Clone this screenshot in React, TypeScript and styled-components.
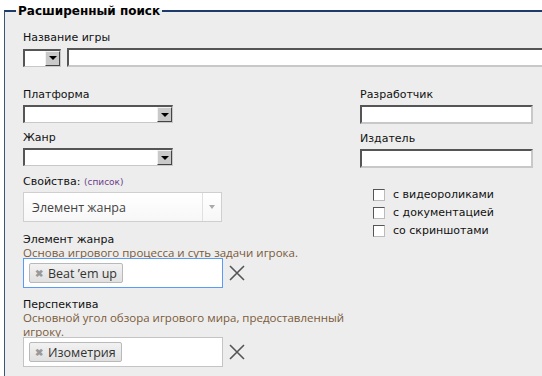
import styled, { createGlobalStyle } from "styled-components";

const GlobalStyle = createGlobalStyle`
  html, body {
    margin: 0;
    padding: 0;
    background: #fff;
  }
  body {
    font-family: "DejaVu Sans", Verdana, sans-serif;
    font-size: 11px;
    color: #111;
  }
`

const Page = styled.div`
  width: 542px;
  height: 376px;
  overflow: hidden;
  padding: 4px 0 0 4px;
  box-sizing: border-box;
`

const Fieldset = styled.fieldset`
  margin: 0;
  padding: 13px 0 20px 18px;
  background: #ededed;
  border: none;
  border-top: 2px solid #1d3c6b;
  border-left: 1px solid #3b5478;
  min-width: 0;
`

const Legend = styled.legend`
  font-weight: bold;
  font-size: 12px;
  padding: 0 2px;
  margin-left: -7px;
  color: #000;
`

const Label = styled.div<{ $tight?: boolean }>`
  line-height: ${p => (p.$tight ? 13 : 14)}px;
  margin-bottom: ${p => (p.$tight ? 0 : 3)}px;
  color: #111;
`

const Small = styled.span`
  font-size: 9px;
  color: #6b3d8a;
`

const Hint = styled.div`
  font-family: "Open Sans", sans-serif;
  font-size: 11.5px;
  line-height: 14px;
  color: #7a5a3a;
  width: 340px;
`

const NameRow = styled.div`
  display: flex;
  align-items: center;
  gap: 6px;
  margin-right: -40px;
`

const Columns = styled.div`
  display: grid;
  grid-template-columns: 337px 173px;
  margin-top: 21px;
`

const Column = styled.div`
  display: flex;
  flex-direction: column;
`

const Field = styled.div<{ $gap?: number }>`
  margin-bottom: ${p => p.$gap ?? 8}px;
`

const ClassicSelect = styled.div<{ $w: number }>`
  width: ${p => p.$w}px;
  height: 18px;
  box-sizing: border-box;
  background: #fff;
  border-top: 2px solid #555;
  border-left: 2px solid #555;
  border-bottom: 1px solid #c8c8c8;
  border-right: 1px solid #c8c8c8;
  display: flex;
  justify-content: flex-end;
`

const ArrowBtn = styled.div`
  width: 15px;
  height: 15px;
  box-sizing: border-box;
  background: #c9c9c9;
  border-top: 1px solid #f2f2f2;
  border-left: 1px solid #f2f2f2;
  border-right: 1px solid #444;
  border-bottom: 1px solid #444;
  display: flex;
  align-items: center;
  justify-content: center;
  &::after {
    content: "";
    border-left: 4px solid transparent;
    border-right: 4px solid transparent;
    border-top: 4px solid #000;
  }
`

const TextInput = styled.div<{ $w?: number }>`
  ${p => (p.$w ? `width: ${p.$w}px;` : "flex: 1;")}
  height: 19px;
  box-sizing: border-box;
  background: #fff;
  border-top: 2px solid #555;
  border-left: 2px solid #555;
  border-bottom: 2px solid #c8c8c8;
  border-right: 2px solid #c8c8c8;
`

const ChosenSingle = styled.div`
  width: 199px;
  height: 30px;
  box-sizing: border-box;
  border: 1px solid #cfcfcf;
  background: linear-gradient(#fff, #f7f7f7);
  display: flex;
  align-items: center;
  font-family: "Open Sans", sans-serif;
  font-size: 12.5px;
  color: #444;
  margin-bottom: 11px;
`

const ChosenText = styled.span`
  flex: 1;
  padding-left: 8px;
`

const ChosenArrow = styled.div`
  width: 18px;
  height: 100%;
  border-left: 1px solid #e0e0e0;
  display: flex;
  align-items: center;
  justify-content: center;
  &::after {
    content: "";
    border-left: 3px solid transparent;
    border-right: 3px solid transparent;
    border-top: 4px solid #aaa;
  }
`

const MultiRow = styled.div`
  display: flex;
  align-items: center;
  gap: 5px;
  margin-top: -2px;
`

const ChosenMulti = styled.div<{ $focus?: boolean }>`
  width: 200px;
  height: 30px;
  box-sizing: border-box;
  border: 1px solid ${p => (p.$focus ? "#5b9bf8" : "#c4c4c4")};
  background: #fff;
  display: flex;
  align-items: center;
  padding-left: 5px;
`

const Tag = styled.div`
  height: 20px;
  box-sizing: border-box;
  border: 1px solid #b9b9b9;
  border-radius: 2px;
  background: linear-gradient(#f2f2f2, #e0e0e0);
  display: flex;
  align-items: center;
  gap: 5px;
  padding: 0 5px;
  font-family: "Open Sans", sans-serif;
  font-size: 12.5px;
  color: #333;
`

const TagX = styled.span`
  font-size: 10px;
  color: #999;
  font-weight: bold;
`

const Clear = styled.svg`
  width: 18px;
  height: 18px;
`

const Checks = styled.div`
  display: flex;
  flex-direction: column;
  gap: 6px;
  margin: 13px 0 0 13px;
`

const CheckRow = styled.label`
  display: flex;
  align-items: center;
  gap: 8px;
  line-height: 12px;
`

const Box = styled.span`
  width: 12px;
  height: 12px;
  box-sizing: border-box;
  background: #fff;
  border-top: 1px solid #555;
  border-left: 1px solid #555;
  border-bottom: 1px solid #bbb;
  border-right: 1px solid #bbb;
`

const Section = styled.div`
  margin-top: 10px;
`

function ClearIcon() {
  return (
    <Clear viewBox="0 0 18 18">
      <path d="M2 2 L16 16 M16 2 L2 16" stroke="#555" strokeWidth="1.6" fill="none" />
    </Clear>
  )
}

function App() {
  return (
    <Page>
      <GlobalStyle />
      <Fieldset>
        <Legend>Расширенный поиск</Legend>
        <Label>Название игры</Label>
        <NameRow>
          <ClassicSelect $w={38}><ArrowBtn /></ClassicSelect>
          <TextInput />
        </NameRow>
        <Columns>
          <Column>
            <Label>Платформа</Label>
            <Field><ClassicSelect $w={150}><ArrowBtn /></ClassicSelect></Field>
            <Label>Жанр</Label>
            <Field $gap={9}><ClassicSelect $w={150}><ArrowBtn /></ClassicSelect></Field>
            <Label>Свойства: <Small>(список)</Small></Label>
            <ChosenSingle>
              <ChosenText>Элемент жанра</ChosenText>
              <ChosenArrow />
            </ChosenSingle>
            <Label $tight>Элемент жанра</Label>
            <Hint>Основа игрового процесса и суть задачи игрока.</Hint>
            <MultiRow>
              <ChosenMulti $focus>
                <Tag><TagX>✖</TagX>Beat ’em up</Tag>
              </ChosenMulti>
              <ClearIcon />
            </MultiRow>
            <Section>
              <Label $tight>Перспектива</Label>
              <Hint>Основной угол обзора игрового мира, предоставленный игроку.</Hint>
              <MultiRow>
                <ChosenMulti>
                  <Tag><TagX>✖</TagX>Изометрия</Tag>
                </ChosenMulti>
                <ClearIcon />
              </MultiRow>
            </Section>
          </Column>
          <Column>
            <Label>Разработчик</Label>
            <Field><TextInput $w={173} /></Field>
            <Label>Издатель</Label>
            <Field><TextInput $w={173} /></Field>
            <Checks>
              <CheckRow><Box />с видеороликами</CheckRow>
              <CheckRow><Box />с документацией</CheckRow>
              <CheckRow><Box />со скриншотами</CheckRow>
            </Checks>
          </Column>
        </Columns>
      </Fieldset>
    </Page>
  )
}

export default App
